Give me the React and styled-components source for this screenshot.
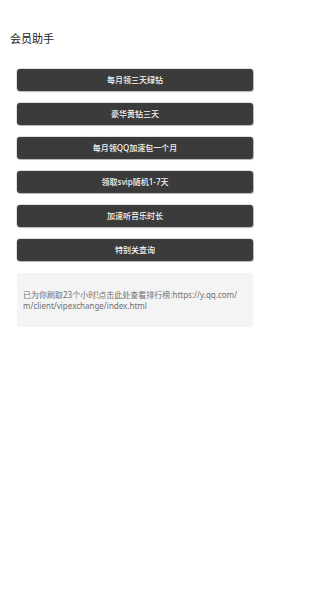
import React from "react";
import styled, { createGlobalStyle } from "styled-components";

const Global = createGlobalStyle`
  html, body { margin: 0; padding: 0; background: #fff; }
  body { font-family: "Noto Sans", "Noto Sans CJK SC", sans-serif; }
`;

const Page = styled.div`
  width: 270px;
  min-height: 600px;
  background: #fff;
`;

const Title = styled.h1`
  margin: 0;
  padding: 31px 0 0 10px;
  font-size: 11px;
  line-height: 14px;
  font-weight: 400;
  color: #1a1a1a;
  font-family: "Noto Sans CJK SC", sans-serif;
`;

const List = styled.div`
  display: flex;
  flex-direction: column;
  gap: 12px;
  padding: 24px 17px 0 17px;
`;

const ActionButton = styled.button`
  height: 22px;
  width: 100%;
  border: none;
  border-radius: 3px;
  background: #3b3b3b;
  box-shadow: 0 0 0 1px rgba(0, 0, 0, 0.12), 1px 1px 1px rgba(0, 0, 0, 0.18);
  color: #f5f5f5;
  font-size: 8px;
  line-height: 22px;
  font-weight: 500;
  font-family: "Noto Sans", "Noto Sans CJK SC", sans-serif;
  padding: 0;
  text-align: center;
  cursor: pointer;
`;

const Info = styled.div`
  background: #f4f4f4;
  border-radius: 3px;
  padding: 16px 6px;
  height: 54px;
  box-sizing: border-box;
  font-size: 8px;
  line-height: 11px;
  color: #707070;
  word-break: break-all;
  font-family: "Noto Sans", "Noto Sans CJK SC", sans-serif;
`;

const items = [
  "每月领三天绿钻",
  "豪华黄钻三天",
  "每月领QQ加速包一个月",
  "领取svip随机1-7天",
  "加速听音乐时长",
  "特别关查询",
];

export default function App() {
  return (
    <Page>
      <Global />
      <Title>会员助手</Title>
      <List>
        {items.map((t) => (
          <ActionButton key={t}>{t}</ActionButton>
        ))}
        <Info>
          已为你刷取23个小时!点击此处查看排行榜:https://y.qq.com/m/client/vipexchange/index.html
        </Info>
      </List>
    </Page>
  );
}
